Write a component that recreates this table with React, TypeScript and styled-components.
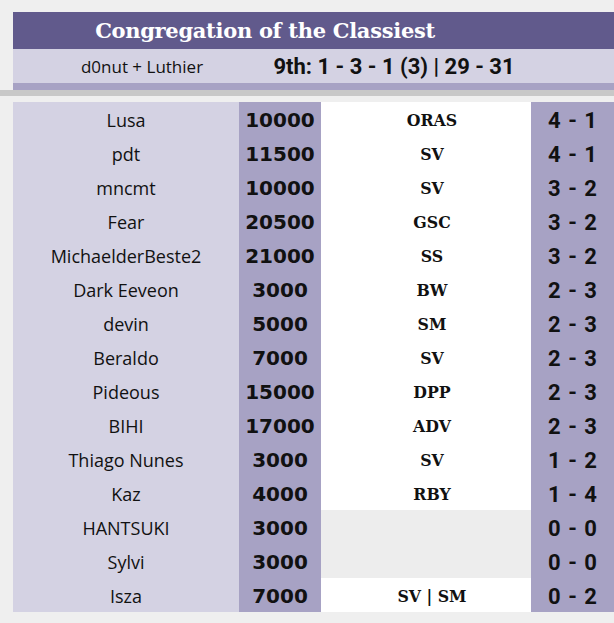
import React from 'react';
import styled, { createGlobalStyle } from 'styled-components';

type Player = {
    name: string;
    price: number;
    tier?: string;
    record: string;
};

const players: Player[] = [
    { name: 'Lusa', price: 10000, tier: 'ORAS', record: '4 - 1' },
    { name: 'pdt', price: 11500, tier: 'SV', record: '4 - 1' },
    { name: 'mncmt', price: 10000, tier: 'SV', record: '3 - 2' },
    { name: 'Fear', price: 20500, tier: 'GSC', record: '3 - 2' },
    { name: 'MichaelderBeste2', price: 21000, tier: 'SS', record: '3 - 2' },
    { name: 'Dark Eeveon', price: 3000, tier: 'BW', record: '2 - 3' },
    { name: 'devin', price: 5000, tier: 'SM', record: '2 - 3' },
    { name: 'Beraldo', price: 7000, tier: 'SV', record: '2 - 3' },
    { name: 'Pideous', price: 15000, tier: 'DPP', record: '2 - 3' },
    { name: 'BIHI', price: 17000, tier: 'ADV', record: '2 - 3' },
    { name: 'Thiago Nunes', price: 3000, tier: 'SV', record: '1 - 2' },
    { name: 'Kaz', price: 4000, tier: 'RBY', record: '1 - 4' },
    { name: 'HANTSUKI', price: 3000, record: '0 - 0' },
    { name: 'Sylvi', price: 3000, record: '0 - 0' },
    { name: 'Isza', price: 7000, tier: 'SV | SM', record: '0 - 2' },
];

const GlobalStyle = createGlobalStyle`
    html, body {
        margin: 0;
        padding: 0;
        background: #efefef;
        overflow: hidden;
    }
`;

const Page = styled.div`
    width: 614px;
    height: 623px;
    padding-top: 12px;
    box-sizing: border-box;
    color: #111;
`;

const Header = styled.div`
    margin-left: 13px;
    display: grid;
    grid-template-columns: 258px 246px 1fr;
`;

const Title = styled.h1`
    grid-column: 1 / 3;
    margin: 0;
    height: 37px;
    line-height: 38px;
    text-align: center;
    font-family: 'DejaVu Serif', serif;
    font-weight: 700;
    font-size: 21px;
    letter-spacing: -0.3px;
    color: #fff;
`;

const TitleFill = styled.div``;

const Band = styled.div`
    display: contents;

    & > * {
        background: #615a8c;
    }
`;

const SubCell = styled.div<{ $bold?: boolean }>`
    height: 34px;
    display: flex;
    align-items: center;
    justify-content: center;
    background: #d4d2e3;
    font-family: ${(p) => (p.$bold ? "Roboto, sans-serif" : "'Open Sans', sans-serif")};
    font-weight: ${(p) => (p.$bold ? 700 : 400)};
    font-size: ${(p) => (p.$bold ? '22px' : '17px')};
    white-space: nowrap;
`;

const Strip = styled.div`
    grid-column: 1 / 4;
    height: 7px;
    background: #a7a2c4;
`;

const Divider = styled.hr`
    margin: 0 0 6px 0;
    border: none;
    height: 6px;
    background: #c8c8c8;
`;

const Table = styled.div`
    margin-left: 13px;
    display: grid;
    grid-template-columns: 226px 82px 210px 83px;
    grid-auto-rows: 34px;
`;

const Cell = styled.div`
    display: flex;
    align-items: center;
    justify-content: center;
    white-space: nowrap;
    padding-top: 2px;
    box-sizing: border-box;
`;

const NameCell = styled(Cell)`
    background: #d4d2e3;
    font-family: 'Open Sans', sans-serif;
    font-size: 18px;
`;

const PriceCell = styled(Cell)`
    background: #a7a2c4;
    font-family: 'DejaVu Sans', sans-serif;
    font-weight: 700;
    font-size: 20px;
`;

const TierCell = styled(Cell)<{ $empty: boolean }>`
    background: ${(p) => (p.$empty ? '#ededed' : '#fff')};
    padding-left: 12px;
    font-family: 'DejaVu Serif', serif;
    font-weight: 700;
    font-stretch: condensed;
    font-size: 17.5px;
`;

const RecordCell = styled(Cell)`
    background: #a7a2c4;
    font-family: Roboto, sans-serif;
    font-weight: 700;
    font-size: 22px;
    word-spacing: 2px;
`;

export default function App() {
    return (
        <>
            <GlobalStyle />
            <Page>
                <Header>
                    <Band>
                        <Title>Congregation of the Classiest</Title>
                        <TitleFill />
                    </Band>
                    <SubCell>d0nut + Luthier</SubCell>
                    <SubCell $bold>9th: 1 - 3 - 1 (3) | 29 - 31</SubCell>
                    <SubCell />
                    <Strip />
                </Header>
                <Divider />
                <Table>
                    {players.map((p) => (
                        <React.Fragment key={p.name}>
                            <NameCell>{p.name}</NameCell>
                            <PriceCell>{p.price}</PriceCell>
                            <TierCell $empty={!p.tier}>{p.tier}</TierCell>
                            <RecordCell>{p.record}</RecordCell>
                        </React.Fragment>
                    ))}
                </Table>
            </Page>
        </>
    );
}
